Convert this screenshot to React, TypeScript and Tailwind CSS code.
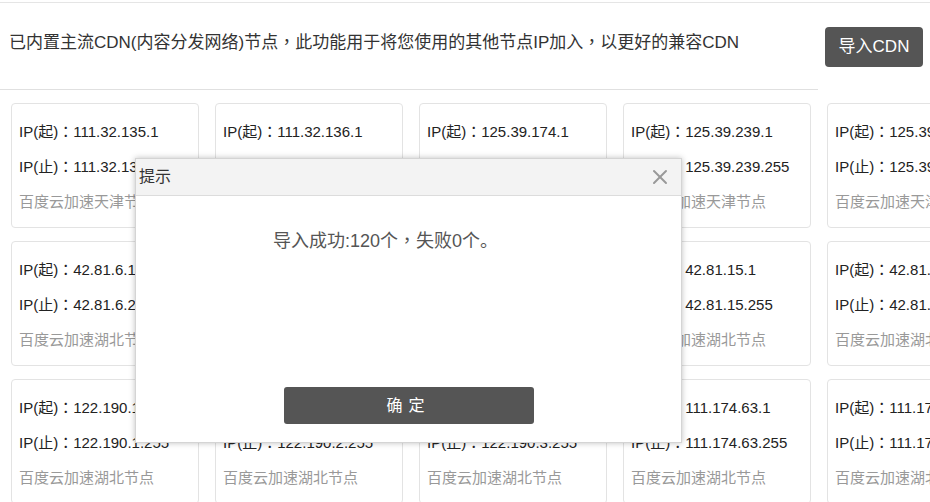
import { X } from 'lucide-react';

const font = { fontFamily: '"Liberation Sans", "Noto Sans CJK SC", sans-serif' };
// centred full-width punctuation, as in the reference
const punct = { fontFamily: '"Noto Sans CJK TC", sans-serif' };

interface Node {
  start: string;
  end: string;
  name: string;
}

const rows: Node[][] = [
  [
    { start: '111.32.135.1', end: '111.32.135.255', name: '百度云加速天津节点' },
    { start: '111.32.136.1', end: '111.32.136.255', name: '百度云加速天津节点' },
    { start: '125.39.174.1', end: '125.39.174.255', name: '百度云加速天津节点' },
    { start: '125.39.239.1', end: '125.39.239.255', name: '百度云加速天津节点' },
    { start: '125.39.240.1', end: '125.39.240.255', name: '百度云加速天津节点' },
  ],
  [
    { start: '42.81.6.1', end: '42.81.6.255', name: '百度云加速湖北节点' },
    { start: '42.81.8.1', end: '42.81.8.255', name: '百度云加速湖北节点' },
    { start: '42.81.9.1', end: '42.81.9.255', name: '百度云加速湖北节点' },
    { start: '42.81.15.1', end: '42.81.15.255', name: '百度云加速湖北节点' },
    { start: '42.81.16.1', end: '42.81.16.255', name: '百度云加速湖北节点' },
  ],
  [
    { start: '122.190.1.1', end: '122.190.1.255', name: '百度云加速湖北节点' },
    { start: '122.190.2.1', end: '122.190.2.255', name: '百度云加速湖北节点' },
    { start: '122.190.3.1', end: '122.190.3.255', name: '百度云加速湖北节点' },
    { start: '111.174.63.1', end: '111.174.63.255', name: '百度云加速湖北节点' },
    { start: '111.174.64.1', end: '111.174.64.255', name: '百度云加速湖北节点' },
  ],
];

function Punct({ ch }: { ch: string }) {
  return (
    <span className="leading-none" style={punct}>
      {ch}
    </span>
  );
}

function NodeCard({ node }: { node: Node }) {
  return (
    <div className="w-[188px] h-[125px] shrink-0 box-border border border-[#e3e3e3] rounded-[4px] pt-[10px] pl-[7px] bg-white">
      <p className="text-[15px] leading-[35px] text-[#222] whitespace-nowrap">
        IP(起)<Punct ch="：" />{node.start}
      </p>
      <p className="text-[15px] leading-[35px] text-[#222] whitespace-nowrap">
        IP(止)<Punct ch="：" />{node.end}
      </p>
      <p className="text-[15px] leading-[35px] text-[#999] whitespace-nowrap">{node.name}</p>
    </div>
  );
}

export default function App() {
  return (
    <div className="relative w-[930px] h-[502px] overflow-hidden bg-white" style={font}>
      <div className="mt-[2px] border-t border-[#e5e5e5]">
        {/* header */}
        <div className="flex">
          <div className="w-[818px] h-[87px] border-b border-[#e0e0e0] pl-[9px] pt-[28px]">
            <p className="text-[17px] leading-[24px] text-[#333] whitespace-nowrap">
              已内置主流CDN(内容分发网络)节点<Punct ch="，" />此功能用于将您使用的其他节点IP加入<Punct ch="，" />以更好的兼容CDN
            </p>
          </div>
          <div className="pl-[7px] pt-[24px]">
            <button className="w-[98px] h-[40px] rounded-[4px] bg-[#555] text-white text-[17px]">导入CDN</button>
          </div>
        </div>

        {/* node grid */}
        <div className="mt-[13px] pl-[11px] flex flex-col gap-[13px]">
          {rows.map((row, i) => (
            <div key={i} className="flex gap-[16px]">
              {row.map((node, j) => (
                <NodeCard key={j} node={node} />
              ))}
            </div>
          ))}
        </div>
      </div>

      {/* dialog */}
      <div className="absolute left-[135px] top-[158px] w-[547px] h-[285px] flex flex-col bg-white border border-[#d4d4d4] shadow-[0_0_6px_rgba(0,0,0,0.25)]">
        <div className="h-[37px] shrink-0 flex items-center justify-between bg-[#f3f3f3] border-b border-[#dcdcdc] pl-[3px] pr-[9px]">
          <span className="text-[16px] text-[#333]">提示</span>
          <X className="w-[24px] h-[24px] text-[#999]" strokeWidth={2} />
        </div>
        <p className="pt-[33px] pr-[46px] text-center text-[18px] leading-[24px] text-[#555]">
          导入成功:120个<Punct ch="，" />失败0个。
        </p>
        <div className="flex-1" />
        <div className="flex justify-center pb-[18px]">
          <button className="w-[250px] h-[37px] rounded-[3px] bg-[#555] text-white text-[16px] tracking-[6px]">确定</button>
        </div>
      </div>
    </div>
  );
}
